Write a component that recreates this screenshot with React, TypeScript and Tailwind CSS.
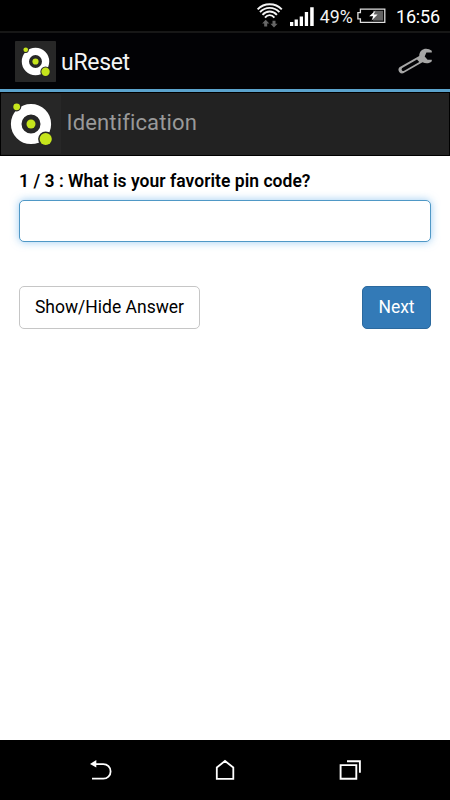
import React from "react";

function Logo({ className }: { className: string }) {
  return (
    <svg className={className} viewBox="0 0 60 60" aria-hidden="true">
      <rect width="60" height="60" rx="1" fill="#272727" />
      <circle cx="30" cy="30" r="14.8" fill="none" stroke="#fff" strokeWidth="10.6" />
      <circle cx="30" cy="30" r="4.5" fill="#c6e51c" />
      <circle cx="15.7" cy="12.8" r="4.6" fill="#272727" />
      <circle cx="15.7" cy="12.8" r="3.4" fill="#c6e51c" />
      <circle cx="44.7" cy="45" r="7.6" fill="#272727" />
      <circle cx="44.7" cy="45" r="6.1" fill="#c6e51c" />
    </svg>
  );
}

function StatusBar() {
  return (
    <div className="flex h-[33px] items-center border-b-2 border-[#171717] bg-black pl-[256px] text-white">
      <svg className="h-[31px] w-[130px] shrink-0" viewBox="256 0 130 31">
        <g fill="none" stroke="#f4f4f4" strokeWidth="1.9">
          <path d="M257.6 9.4C264.2 2.6 275.2 2.6 281.8 9.4" />
          <path d="M260 12.1C265.3 6.4 274.1 6.4 279.4 12.1" />
          <path d="M262.5 14.8C266.5 10.3 272.9 10.3 276.9 14.8" />
          <path d="M265 17.6C267.7 14.3 271.7 14.3 274.4 17.6" />
        </g>
        <path d="M265.7 19.8l3.6 3.8h-2.1v3h-3v-3h-2.1zM274 27.6l-3.6-3.8h2.1v-3h3v3h2.1z" fill="#666" />
        <path d="M290 22h3.3v4H290zM294.6 19.4h3.3V26h-3.3zM299.7 16.4h3.3V26h-3.3zM304.8 12h3.3v14h-3.3zM310.2 7.3h3.5V26h-3.5z" fill="#fff" />
        <text x="319.8" y="22.7" fill="#f2f2f2" fontFamily="Roboto, sans-serif" fontSize="18.5" textLength="33" lengthAdjust="spacingAndGlyphs">49%</text>
        <path d="M360.4 9.1h24.4v13.2h-24.4v-3.5h-2.5v-6.1h2.5z" fill="none" stroke="#dedede" strokeWidth="1.3" />
        <path d="M373 10.8h10.1v9.8H373z" fill="#626262" />
        <path d="M375.6 10.4l-6.4 5.8h4l-1.6 4.4 6-6h-4z" fill="#fff" />
      </svg>
      <span className="relative left-[10px] top-px whitespace-nowrap text-[18px] leading-5 tracking-[-0.2px]">16:56</span>
    </div>
  );
}

export default function App() {
  return (
    <div className="flex h-[800px] w-[450px] flex-col overflow-hidden bg-white font-['Roboto',sans-serif] text-black">
      <StatusBar />
      <header className="flex h-[59px] items-center border-b-[3px] border-[#5ba3cd] bg-[#020205] pl-[15px] pr-[17px]">
        <Logo className="h-[41px] w-[41px]" />
        <h1 className="ml-[5px] pt-[3px] text-[23px] leading-7 tracking-[-0.3px] text-[#f4f4f4]">uReset</h1>
        <svg className="ml-auto h-[28px] w-[36px]" viewBox="397 47 36 28" aria-label="Settings">
          <path
            fillRule="evenodd"
            fill="#a6a6a6"
            d="M431.8 50.8C428.5 48.1 424 48 421.4 50.6C419.6 52.4 419.3 54.3 419.2 55.9L399.9 66.9C396.8 69.2 399 74.2 403.2 73.3L422.5 62.3C425.8 63.9 429.5 63.6 431.8 61.2V59.8H427.6L424.7 56.6L426.4 52.6H431.8ZM417 59.4L419.3 62L404.2 70.7C402.2 71.6 400.7 69.5 402.2 68.1Z"
          />
        </svg>
      </header>
      <section className="flex h-16 items-center border border-black bg-[#222]">
        <Logo className="h-[60px] w-[60px]" />
        <h2 className="ml-[5.5px] pb-[2px] text-[22px] leading-7 tracking-[0.15px] text-[#999]">Identification</h2>
      </section>
      <main className="flex flex-1 flex-col px-[19px] pt-[14px]">
        <label htmlFor="answer" className="h-[30px] whitespace-nowrap pt-px text-[17.5px] font-semibold leading-[21px] tracking-[0.03px]">
          1 / 3 : What is your favorite pin code?
        </label>
        <input id="answer" className="h-[42px] w-full rounded-[5px] border border-[#4f98c6] bg-white px-3 shadow-[0_0_8px_rgba(102,175,233,0.65)] outline-none" />
        <div className="mt-11 flex justify-between">
          <button className="h-[43px] w-[181px] whitespace-nowrap rounded-[5px] border border-[#c6c6c6] bg-white pb-px text-[17.5px]">Show/Hide Answer</button>
          <button className="h-[43px] w-[69px] rounded-[5px] border border-[#2b699e] bg-[#337ab7] pb-px text-[17.5px] text-white">Next</button>
        </div>
      </main>
      <nav className="flex h-[60px] items-center justify-between bg-black px-[88px]">
        <svg className="h-6 w-6" viewBox="88 758 24 24" fill="none" stroke="#fff" strokeWidth="1.8">
          <path d="M94 764.1h9.3a7.3 7.3 0 0 1 0 14.6H92" />
          <path d="M90 764l6.3-4v7.5z" fill="#fff" stroke="none" />
        </svg>
        <svg className="h-6 w-6" viewBox="213 758 24 24" fill="none" stroke="#fff" strokeWidth="1.8">
          <path d="M216.8 767.5L225 761l8.3 6.5v11.3h-16.5z" />
        </svg>
        <svg className="h-6 w-6" viewBox="338 758 24 24" fill="none" stroke="#fff" strokeWidth="1.9">
          <path d="M340.6 765.1h15.7v13.6h-15.7zM347 761.2h12.9v11.5" />
        </svg>
      </nav>
    </div>
  );
}
